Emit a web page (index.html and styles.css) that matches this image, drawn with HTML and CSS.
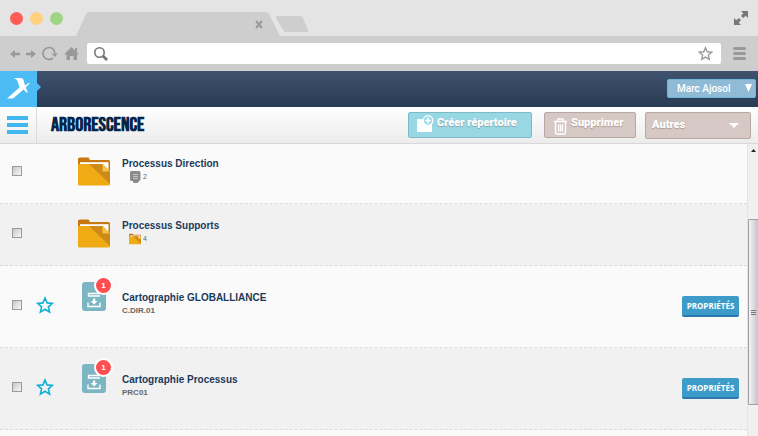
FILE: index.html
```html
<!DOCTYPE html>
<html lang="fr">
<head>
<meta charset="utf-8">
<meta name="viewport" content="width=device-width, initial-scale=1">
<title>Arborescence</title>
<link rel="stylesheet" href="styles.css">
</head>
<body>
<svg class="defs" aria-hidden="true">
  <symbol id="folder" viewBox="0 0 32 29">
    <path fill="#c9780f" d="M0 2a1.500 1.500 0 0 1 1.500-1.500H10a1.500 1.500 0 0 1 1.500 1.500v1H30.500a1.500 1.500 0 0 1 1.500 1.500V15H0z"/>
    <path fill="#fff" d="M2 5.200H30.500V14H2z"/>
    <path fill="#f0ab14" d="M0 7H24.500L32 14.500V27a1.500 1.500 0 0 1-1.500 1.500h-29A1.500 1.500 0 0 1 0 27z"/>
    <path fill="#cd8a17" d="M11 7H24.500L32 14.500V27z"/>
    <path fill="#f6c445" d="M24.500 7L32 14.500h-7.500z"/>
  </symbol>
  <symbol id="star" viewBox="0 0 18 18">
    <path fill="none" stroke="currentColor" stroke-width="1.600" d="M9 2l2.100 4.900 5.300.5-4 3.500 1.200 5.200L9 13.300l-4.600 2.800 1.200-5.200-4-3.500 5.300-.5z"/>
  </symbol>
  <symbol id="card" viewBox="0 0 24 29">
    <path fill="#7cb6c2" d="M3 0h18a3 3 0 0 1 3 3v23a3 3 0 0 1-3 3H3a3 3 0 0 1-3-3V3a3 3 0 0 1 3-3z"/>
    <path fill="none" stroke="#fff" stroke-width="1.400" d="M18 11.500H6.500v2.500H18M6 20.500v4h12v-4"/>
    <path fill="#fff" d="M11 16.500h2.200v2.500h2.300l-3.400 3.500-3.400-3.500H11z"/>
  </symbol>
</svg>

<div class="tabs">
  <span class="dot red"></span><span class="dot yellow"></span><span class="dot green"></span>
  <svg class="tab" viewBox="0 0 234 36" aria-hidden="true">
    <path fill="#cecece" d="M0 36L10 14q1-2 3-2H190q2 0 3 2l11 22z"/>
    <path fill="none" stroke="#999" stroke-width="2" d="M180 21l6 7M186 21l-6 7"/>
    <path fill="#cecece" d="M201 16h23q2 0 3 2l5 12q1 2-1 2h-21q-2 0-3-2l-7-12q-1-2 1-2z"/>
  </svg>
  <svg class="expand" viewBox="0 0 14 14" aria-hidden="true"><path fill="#777" d="M7 0h7v7l-2.300-2.300-2.500 2.400-2.200-2.200L9.300 2.300zM0 14V7l2.300 2.300 2.500-2.400 2.200 2.200-2.300 2.600L7 14z"/></svg>
</div>

<div class="toolbar">
  <svg class="nav-icons" viewBox="0 0 70 16" aria-hidden="true">
    <g fill="#999">
      <path d="M0 8l5-4v2.800h5v2.400H5V12zM26 8l-5-4v2.800h-5v2.400h5V12z"/>
      <path d="M41.500 7.500h6.500L44.800 11z"/>
      <path d="M61.500 1l7.500 7.500h-2V14h-3.500v-4h-3.500v4H56.500V8.500H54z"/><path d="M65 2h2v5h-2z"/>
    </g>
    <path fill="none" stroke="#999" stroke-width="1.700" d="M43 12A6 6 0 1 1 45 7.500"/>
  </svg>
  <label class="address">
    <svg class="glass" viewBox="0 0 14 14" aria-hidden="true"><circle cx="5.500" cy="5.500" r="4.700" fill="none" stroke="#777" stroke-width="1.600"/><path d="M9 9l4 4" stroke="#777" stroke-width="2.800"/></svg>
    <input type="text" aria-label="Adresse">
    <svg class="fav" aria-hidden="true"><use href="#star"/></svg>
  </label>
  <svg class="menu" viewBox="0 0 13 13" aria-hidden="true"><path stroke="#999" stroke-width="3" stroke-linecap="round" d="M1.500 1.500h10M1.500 6.500h10M1.500 11.500h10"/></svg>
</div>

<header class="top">
  <a class="logo" href="#" aria-label="Accueil">
    <svg viewBox="0 0 41 36" aria-hidden="true"><path fill="#4dbcf4" d="M0 0h37v12l4 4-4 4v16H0z"/><path fill="#fff" d="M14 7h7q2 0 2.500 2l1.500 5.500 3.500-2.500h1.500l-4.300 4.500 2.300 5h-1.500l-3-3L13 27.500H7l12.500-11L17.500 10q-.5-1.300-3.500-3z"/></svg>
  </a>
  <button class="user" type="button"><span>Marc Ajosol</span><svg viewBox="0 0 7 8" aria-hidden="true"><path fill="#fff" d="M0 0h7L3.500 8z"/></svg></button>
</header>

<div class="titlebar">
  <button class="burger" type="button" aria-label="Menu"><svg viewBox="0 0 21 18" aria-hidden="true"><path fill="#41b6ef" d="M0 0h21v4H0zM0 7h21v4H0zM0 14h21v4H0z"/></svg></button>
  <h1>ARBORESCENCE</h1>
  <button class="action create" type="button">
    <svg viewBox="0 0 17 18" aria-hidden="true"><path fill="#fff" d="M0 4h6l1 2h8v11H0z"/><circle cx="11" cy="5.500" r="4.800" fill="#98d8e4" stroke="#fff" stroke-width="1.200"/><path stroke="#fff" stroke-width="1.500" d="M8 5.500h6M11 2.500v6"/></svg>
    <span>Créer répertoire</span></button>
  <button class="action remove" type="button">
    <svg viewBox="0 0 13 18" aria-hidden="true"><path fill="none" stroke="#fff" stroke-width="1.400" d="M0 4.500h13M4 4V2h5v2M1.500 5v10.500q0 1.500 1.500 1.500h7q1.500 0 1.500-1.500V5M4.500 7.500v7M6.500 7.500v7M8.500 7.500v7"/></svg>
    <span>Supprimer</span></button>
  <button class="action other" type="button"><span>Autres</span><svg viewBox="0 0 10 5" aria-hidden="true"><path fill="#fff" d="M0 0h10L5 5z"/></svg></button>
</div>

<main>
  <ul class="list">
    <li class="row folder">
      <input type="checkbox" aria-label="Processus Direction">
      <span class="star"></span>
      <span class="pic"><svg class="folder-icon" aria-hidden="true"><use href="#folder"/></svg></span>
      <div class="text"><h2>Processus Direction</h2>
        <p class="count"><svg viewBox="0 0 12 12" aria-hidden="true"><path fill="#8b8b8b" d="M2 0h8q1.500 0 1.500 1.500v7L8.500 12H5q-1 0-1-1v-1H3Q1 10 1 8.500v-7Q1 0 2 0z"/><path stroke="#c4c4c4" d="M4 3.500h5M4 5.500h5M4 7.500h5"/></svg>2</p></div>
    </li>
    <li class="row folder">
      <input type="checkbox" aria-label="Processus Supports">
      <span class="star"></span>
      <span class="pic"><svg class="folder-icon" aria-hidden="true"><use href="#folder"/></svg></span>
      <div class="text"><h2>Processus Supports</h2>
        <p class="count"><svg aria-hidden="true"><use href="#folder"/></svg>4</p></div>
    </li>
    <li class="row doc">
      <input type="checkbox" aria-label="Cartographie GLOBALLIANCE">
      <button class="star" type="button" aria-label="Favori"><svg aria-hidden="true"><use href="#star"/></svg></button>
      <span class="pic"><svg class="card-icon" aria-hidden="true"><use href="#card"/></svg><span class="badge">1</span></span>
      <div class="text"><h2>Cartographie GLOBALLIANCE</h2><p>C.DIR.01</p></div>
      <button class="props" type="button">PROPRIÉTÉS</button>
    </li>
    <li class="row doc">
      <input type="checkbox" aria-label="Cartographie Processus">
      <button class="star" type="button" aria-label="Favori"><svg aria-hidden="true"><use href="#star"/></svg></button>
      <span class="pic"><svg class="card-icon" aria-hidden="true"><use href="#card"/></svg><span class="badge">1</span></span>
      <div class="text"><h2>Cartographie Processus</h2><p>PRC01</p></div>
      <button class="props" type="button">PROPRIÉTÉS</button>
    </li>
    <li class="row"></li>
  </ul>
  <div class="scroll" aria-hidden="true">
    <svg viewBox="0 0 5 3"><path fill="#222" d="M0 3h5L2.500 0z"/></svg>
    <div class="thumb"><i></i><i></i><i></i></div>
  </div>
</main>
</body>
</html>
```
FILE: styles.css
```css
* { box-sizing: border-box; }
body {
  margin: 0;
  height: 100vh;
  display: flex;
  flex-direction: column;
  overflow: hidden;
  background: #fafafa;
  font-family: "Liberation Sans", Arial, sans-serif;
}
h1, h2, p, ul { margin: 0; padding: 0; }
button, input { font: inherit; margin: 0; padding: 0; border: 0; }
button { background: none; cursor: pointer; white-space: nowrap; }
svg { display: block; flex: none; }
.defs { position: absolute; width: 0; height: 0; }

/* Browser chrome */
.tabs {
  flex: none;
  display: flex;
  align-items: center;
  height: 36px;
  padding: 0 10px;
  background: #e4e4e4;
}
.dot { width: 13px; height: 13px; margin-right: 7px; border-radius: 50%; }
.red { background: #ff5c57; }
.yellow { background: #ffd07f; }
.green { background: #a0d585; }
.tab { width: 234px; height: 36px; margin-left: 6px; }
.expand { width: 14px; height: 14px; margin-left: auto; }
.toolbar {
  flex: none;
  display: flex;
  align-items: center;
  height: 35px;
  padding: 0 12px 0 10px;
  background: #cecece;
}
.nav-icons { width: 70px; height: 16px; }
.address {
  flex: 1;
  display: flex;
  align-items: center;
  height: 21px;
  margin: 0 12px 0 7px;
  padding: 0 8px 0 7px;
  background: #fff;
  border-radius: 2px;
}
.address input { flex: 1; min-width: 0; background: none; outline: 0; font-size: 12px; padding: 0 6px; }
.glass { width: 14px; height: 14px; }
.fav { width: 15px; height: 15px; color: #999; }
.menu { width: 13px; height: 13px; }

/* Application header */
.top {
  flex: none;
  display: flex;
  align-items: center;
  justify-content: space-between;
  height: 36px;
  padding-right: 2px;
  background: linear-gradient(#40536e, #293a54);
}
.logo svg { width: 41px; height: 36px; }
.user {
  display: flex;
  align-items: center;
  justify-content: space-between;
  width: 89px;
  height: 19px;
  margin-bottom: 2px;
  padding: 0 3px 0 9px;
  background: #8fbbd7;
  border: 1px solid #6fb4da;
  border-radius: 2px;
  color: #fff;
  font: 500 10px Roboto, sans-serif;
}
.user svg { width: 7px; height: 8px; }
.titlebar {
  flex: none;
  display: flex;
  align-items: center;
  height: 37px;
  padding-right: 7px;
  background: linear-gradient(#fff, #ececec);
  border-bottom: 1px solid #d8d8d8;
}
.burger {
  display: grid;
  place-items: center;
  width: 37px;
  height: 100%;
  padding-right: 2px;
  border-right: 1px solid #dcdcdc;
}
.burger svg { width: 21px; height: 18px; }
h1 {
  margin: 0 auto 0 14px;
  color: #04264a;
  font: bold 20px "Bebas Neue", "Roboto Condensed", "Liberation Sans Narrow", sans-serif;
}
.action {
  display: flex;
  height: 26px;
  margin-left: 12px;
  border: 1px solid #b8a8a4;
  border-radius: 2px;
  background: #d6c8c4;
  color: #fff;
  font: 900 11px/20px Roboto, sans-serif;
  text-shadow: 0 1px 1px rgba(120, 80, 80, .4);
}
.create { width: 124px; padding: 0 0 0 8px; background: #98d8e4; border-color: #7db9c6; gap: 3px; }
.create svg { width: 17px; height: 18px; margin-top: 2px; }
.remove { width: 92px; padding-left: 9px; gap: 4px; }
.remove svg { width: 13px; height: 18px; margin-top: 4px; }
.other { width: 106px; height: 27px; margin-left: 9px; padding: 0 11px 0 6px; align-items: center; justify-content: space-between; }
.other svg { width: 10px; height: 5px; }

/* Tree list */
main { flex: 1; min-height: 0; display: flex; overflow: hidden; }
.list { flex: 1; list-style: none; }
.row {
  display: flex;
  align-items: flex-start;
  height: 82px;
  padding: 0 8px 0 12px;
  background: #fafafa;
  border-bottom: 1px dashed #dcdcdc;
}
.row:nth-child(even) { background: #f1f1f1; }
.folder { height: 62px; padding-top: 15px; }
.folder:first-child { height: 60px; padding-top: 13px; }
.doc { padding-top: 12px; }
.row input {
  appearance: none;
  width: 10px;
  height: 10px;
  border: 1px solid #9a9a9a;
  background: linear-gradient(135deg, #c8c8c8, #f8f8f8);
  outline: 0;
}
.folder input { margin-top: 9px; }
.doc input { margin-top: 22px; }
.star { width: 18px; margin-left: 14px; color: #12afd6; }
.doc .star { margin-top: 18px; }
.star svg { width: 18px; height: 18px; }
.pic { position: relative; width: 68px; padding-left: 24px; }
.doc .pic { padding: 4px 0 0 28px; }
.folder-icon { width: 32px; height: 29px; }
.card-icon { width: 24px; height: 29px; }
.badge {
  position: absolute;
  top: -2px;
  left: 40px;
  width: 19px;
  height: 19px;
  border: 2px solid #fff;
  border-radius: 50%;
  background: #fd4f52;
  color: #fff;
  font: bold 8px/15px "Liberation Sans", sans-serif;
  text-align: center;
}
.text { flex: 1; }
h2 { color: #1a3a5c; font: bold 10px/13px "Liberation Sans", Arial, sans-serif; }
.doc .text { padding-top: 13px; }
.text p { color: #666; font-size: 8px; font-weight: bold; line-height: 14px; }
.text .count { display: flex; align-items: center; gap: 2px; padding-left: 7px; font-size: 7px; font-weight: normal; }
.count svg { width: 12px; height: 12px; }
.props {
  width: 57px;
  height: 21px;
  margin-top: 18px;
  border-bottom: 2px solid #2c78b0;
  border-radius: 2px;
  background: #3d9bc9;
  color: #fff;
  font: bold 8px "Open Sans", sans-serif;
}
.scroll {
  width: 11px;
  background: #f0f0f0;
  border-left: 1px solid #e4e4e4;
  display: flex;
  flex-direction: column;
  align-items: center;
  padding-top: 5px;
}
.scroll > svg { width: 5px; height: 3px; }
.thumb {
  width: 11px;
  height: 43%;
  min-height: 186px;
  margin-top: 67px;
  display: flex;
  flex-direction: column;
  align-items: center;
  justify-content: center;
  gap: 1px;
  border: 1px solid #a0a0a4;
  border-radius: 1px;
  background: linear-gradient(90deg, #f4f4f5, #dcdce0 50%, #c2c2c8);
}
.thumb i { width: 5px; height: 1px; background: #777; }
```
